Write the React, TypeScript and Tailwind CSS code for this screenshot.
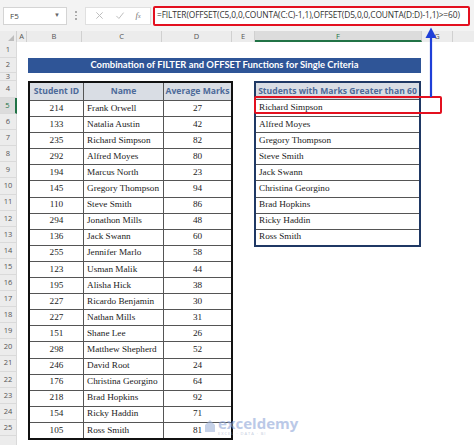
import React from 'react';

const students: [number, string, number][] = [
  [214, 'Frank Orwell', 27],
  [133, 'Natalia Austin', 42],
  [235, 'Richard Simpson', 82],
  [292, 'Alfred Moyes', 80],
  [194, 'Marcus North', 23],
  [145, 'Gregory Thompson', 94],
  [110, 'Steve Smith', 86],
  [294, 'Jonathon Mills', 48],
  [136, 'Jack Swann', 60],
  [255, 'Jennifer Marlo', 58],
  [123, 'Usman Malik', 44],
  [195, 'Alisha Hick', 38],
  [227, 'Ricardo Benjamin', 30],
  [227, 'Nathan Mills', 31],
  [151, 'Shane Lee', 26],
  [298, 'Matthew Shepherd', 52],
  [246, 'David Root', 24],
  [176, 'Christina Georgino', 64],
  [218, 'Brad Hopkins', 92],
  [154, 'Ricky Haddin', 71],
  [105, 'Ross Smith', 81],
];

const filtered = [
  'Richard Simpson',
  'Alfred Moyes',
  'Gregory Thompson',
  'Steve Smith',
  'Jack Swann',
  'Christina Georgino',
  'Brad Hopkins',
  'Ricky Haddin',
  'Ross Smith',
];

const FORMULA = '=FILTER(OFFSET(C5,0,0,COUNTA(C:C)-1,1),OFFSET(D5,0,0,COUNTA(D:D)-1,1)>=60)';

const sans = { fontFamily: '"Open Sans", "Liberation Sans", sans-serif' };
const serif = { fontFamily: '"Liberation Serif", serif' };
const calibri = { fontFamily: 'Lato, "Open Sans", sans-serif' };

// row header heights (rows 1..26)
const rowHeights = [16, 15, 8, 17, ...Array(21).fill(16.1), 12];

export default function App() {
  return (
    <div className="relative w-[474px] h-[445px] overflow-hidden bg-white" style={sans}>
      {/* ── FORMULA BAR ── */}
      <div className="flex h-[31px] items-center bg-[#f3f3f3] pl-[3px] pr-[4px]">
        <div className="flex h-[18px] w-[64px] items-center justify-between border border-[#d4d4d4] bg-white px-[6px] text-[8px] text-[#444]">
          <span>F5</span>
          <span className="text-[6px] text-[#666]">▼</span>
        </div>
        <div className="flex w-[18px] flex-col items-center gap-[2px]">
          <span className="h-[1.5px] w-[1.5px] bg-[#aaa]" />
          <span className="h-[1.5px] w-[1.5px] bg-[#aaa]" />
          <span className="h-[1.5px] w-[1.5px] bg-[#aaa]" />
        </div>
        <div className="flex h-[18px] w-[66px] items-center justify-around border border-[#e0e0e0] bg-white px-[4px] text-[#b5b5b5]">
          <svg width="9" height="9" viewBox="0 0 10 10">
            <path d="M1.5 1.5 L8.5 8.5 M8.5 1.5 L1.5 8.5" stroke="#bdbdbd" strokeWidth="1.1" />
          </svg>
          <svg width="10" height="9" viewBox="0 0 10 10">
            <path d="M1 5.5 L3.8 8.3 L9 1.8" stroke="#bdbdbd" strokeWidth="1.1" fill="none" />
          </svg>
          <span className="text-[9px] italic text-[#777]" style={serif}>
            f<span className="text-[6px]">x</span>
          </span>
        </div>
        <div className="ml-[2px] flex h-[20px] flex-1 items-center overflow-hidden rounded-[2px] border-[2.5px] border-[#e3101f] bg-white pl-[2px] text-[8.4px] tracking-[-0.12px] text-[#333] whitespace-nowrap">
          {FORMULA}
        </div>
      </div>

      {/* ── COLUMN HEADERS ── */}
      <div className="flex h-[11px] bg-[#ececec] text-[7.5px] leading-[11px] text-[#555]">
        <div className="relative w-[17px] border-r border-[#d0d0d0]">
          <svg className="absolute bottom-[1px] right-[2px]" width="6" height="6" viewBox="0 0 6 6">
            <path d="M6 0 L6 6 L0 6 Z" fill="#bdbdbd" />
          </svg>
        </div>
        <div className="w-[10px] border-r border-[#d0d0d0] text-center">A</div>
        <div className="w-[55px] border-r border-[#d0d0d0] text-center">B</div>
        <div className="w-[80px] border-r border-[#d0d0d0] text-center">C</div>
        <div className="w-[70px] border-r border-[#d0d0d0] text-center">D</div>
        <div className="w-[23px] border-r border-[#d0d0d0] text-center">E</div>
        <div className="w-[167px] border-r border-[#d0d0d0] border-b-2 border-b-[#217346] bg-[#dcdcdc] text-center text-[#217346]">F</div>
        <div className="w-[30px] text-center">G</div>
        <div className="flex-1 border-l border-[#d0d0d0]" />
      </div>

      {/* ── SHEET BODY ── */}
      <div className="flex">
        {/* row numbers */}
        <div className="flex w-[17px] flex-col bg-[#ececec] text-[7.5px] text-[#555]">
          {rowHeights.map((h, i) => (
            <div
              key={i}
              className={`flex items-center justify-center border-b border-r border-[#dadada] ${
                i === 4 ? 'border-r-2 border-r-[#217346] bg-[#dcdcdc] text-[#217346]' : ''
              }`}
              style={{ height: h }}
            >
              {i === 25 ? '' : i + 1}
            </div>
          ))}
        </div>

        {/* cells */}
        <div className="flex flex-1 flex-col">
          <div className="h-[16px]" />
          <div
            className="ml-[11px] flex h-[15px] w-[393px] items-center justify-center bg-[#2f5597] text-[9.4px] font-bold text-white"
            style={calibri}
          >
            Combination of FILTER and OFFSET Functions for Single Criteria
          </div>
          <div className="h-[8px]" />

          <div className="flex items-start">
            {/* left table */}
            <div className="ml-[11px] w-[205px] border-2 border-[#111]">
              <div className="flex h-[17px] bg-[#d9dde4] text-[8.6px] font-bold text-[#4d6a99]">
                <div className="flex w-[54px] items-center justify-center border-r border-[#555]">Student ID</div>
                <div className="flex w-[80px] items-center justify-center border-r border-[#555]">Name</div>
                <div className="flex flex-1 items-center justify-center">Average Marks</div>
              </div>
              {students.map(([id, name, mark], i) => (
                <div key={i} className="flex h-[16.1px] border-t border-[#555] text-[9.2px] text-[#222]" style={serif}>
                  <div className="flex w-[54px] items-center justify-center border-r border-[#555]">{id}</div>
                  <div className="flex w-[80px] items-center border-r border-[#555] pl-[3px] whitespace-nowrap">{name}</div>
                  <div className="flex flex-1 items-center justify-center">{mark}</div>
                </div>
              ))}
            </div>

            {/* right table */}
            <div className="ml-[21px] w-[167px] border-2 border-[#1f3864]">
              <div className="flex h-[17px] items-center justify-center border-b border-[#555] bg-[#d9dde4] text-[8.6px] font-bold text-[#4d6a99]">
                Students with Marks Greater than 60
              </div>
              {filtered.map((n, i) => (
                <div
                  key={i}
                  className={`flex h-[16.1px] items-center pl-[3px] text-[9.2px] text-[#222] ${
                    i > 0 ? 'border-t border-[#555]' : ''
                  }`}
                  style={serif}
                >
                  {n}
                </div>
              ))}
            </div>
          </div>
        </div>
      </div>

      {/* ── OVERLAYS ── */}
      <div className="absolute left-[254px] top-[96px] h-[18px] w-[188px] rounded-[2px] border-[2.5px] border-[#e3101f]" />
      <svg className="absolute left-[425px] top-[27px]" width="12" height="70" viewBox="0 0 12 70">
        <path d="M6 10 L6 70" stroke="#1f3fd8" strokeWidth="2.2" />
        <path d="M0.5 11 L6 0.5 L11.5 11 Z" fill="#1f3fd8" />
      </svg>

      {/* watermark */}
      <div className="absolute left-[204px] top-[416px] flex items-center gap-[2px] opacity-60">
        <svg width="12" height="14" viewBox="0 0 12 14">
          <path d="M1 6 L6 1 L11 6 L11 13 L1 13 Z" fill="#9fb3d9" />
        </svg>
        <div className="flex flex-col leading-none">
          <span className="text-[15px] font-bold text-[#8ea6d8]">exceldemy</span>
          <span className="mt-[1px] text-[4px] tracking-[1px] text-[#9aa9c8]">EXCEL · DATA · BI</span>
        </div>
      </div>
    </div>
  );
}
